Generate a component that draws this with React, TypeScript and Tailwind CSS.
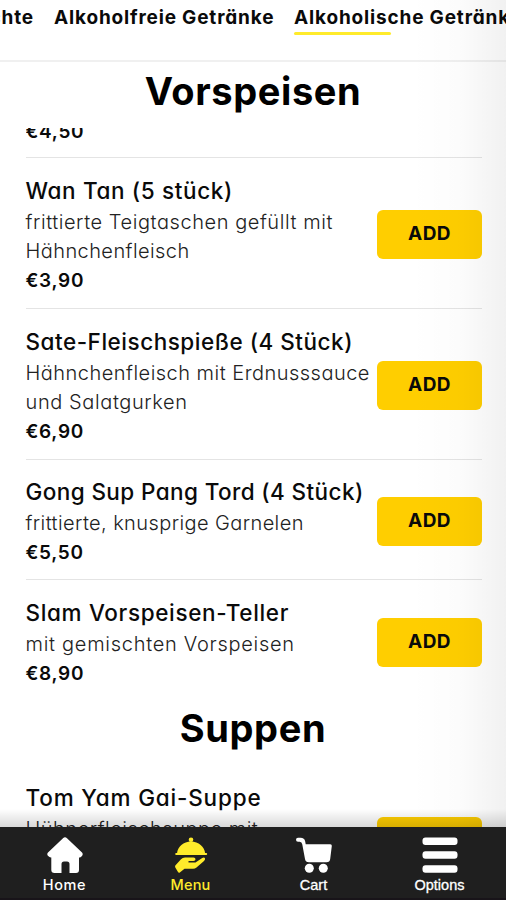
type Line = { text: string; tracking: string };

type Dish = {
  name: Line;
  lines: Line[];
  price?: string;
  box: string;
  body?: string;
};

const starters: Dish[] = [
  {
    name: { text: "Wan Tan (5 stück)", tracking: "tracking-[0.64px]" },
    lines: [
      { text: "frittierte Teigtaschen gefüllt mit", tracking: "tracking-[0.56px]" },
      { text: "Hähnchenfleisch", tracking: "tracking-[0.42px]" },
    ],
    price: "€3,90",
    box: "h-[151px] pt-4 border-b",
  },
  {
    name: { text: "Sate-Fleischspieße (4 Stück)", tracking: "tracking-[0.52px]" },
    lines: [
      { text: "Hähnchenfleisch mit Erdnusssauce", tracking: "tracking-[0.48px]" },
      { text: "und Salatgurken", tracking: "tracking-[0.6px]" },
    ],
    price: "€6,90",
    box: "h-[151px] pt-4 border-b",
  },
  {
    name: { text: "Gong Sup Pang Tord (4 Stück)", tracking: "tracking-[0.4px]" },
    lines: [{ text: "frittierte, knusprige Garnelen", tracking: "tracking-[0.4px]" }],
    price: "€5,50",
    box: "h-[120px] pt-[15px] border-b",
  },
  {
    name: { text: "Slam Vorspeisen-Teller", tracking: "tracking-[0.66px]" },
    lines: [{ text: "mit gemischten Vorspeisen", tracking: "tracking-[0.72px]" }],
    price: "€8,90",
    box: "h-[126px] pt-4",
  },
];

const soups: Dish[] = [
  {
    name: { text: "Tom Yam Gai-Suppe", tracking: "tracking-[0.82px]" },
    lines: [{ text: "Hühnerfleischsuppe mit", tracking: "tracking-[0.5px]" }],
    box: "h-[151px] pt-[17px]",
    body: "h-[121px]",
  },
];

function DishRow({ dish }: { dish: Dish }) {
  return (
    <div className={`ml-[25.5px] mr-6 flex shrink-0 items-start justify-between border-[#e4e4e4] ${dish.box}`}>
      <div className={`flex w-full items-center justify-between ${dish.body ?? ""}`}>
        <div className="w-[351px] self-start whitespace-nowrap">
          <h3 className={`text-[22.5px] leading-[33.5px] font-medium ${dish.name.tracking}`}>{dish.name.text}</h3>
          {dish.lines.map((line) => (
            <p key={line.text} className={`text-[20px] leading-[29.3px] font-light text-[#222] ${line.tracking}`}>
              {line.text}
            </p>
          ))}
          {dish.price && <p className="text-[19px] leading-[29.3px] font-semibold tracking-[0.7px]">{dish.price}</p>}
        </div>
        <button className="h-[49px] w-[105px] shrink-0 rounded-md bg-[#ffce00] text-[19px] font-bold tracking-[0.4px]">
          ADD
        </button>
      </div>
    </div>
  );
}

function HomeIcon() {
  return (
    <svg viewBox="0 0 36 36" className="size-9" fill="currentColor">
      <path d="M16 1.2Q18-.6 20 1.2L35 15.6Q36.4 17.2 35 19L33.5 20.2Q32.6 20.6 32 20.4V33Q32 36 29 36H22.5V27Q22.5 24.5 20 24.5H17Q14.5 24.5 14.5 27V36H7.500Q4.300 36 4.300 33V20.400Q3.500 20.700 2.500 20L.9 18.800Q-.4 17.200 1 15.600Z" />
    </svg>
  );
}

function MenuIcon() {
  return (
    <svg viewBox="0 0 36 36" className="size-9" fill="currentColor">
      <circle cx="18" cy="2.800" r="2.300" />
      <path d="M4 16.500C4.500 9.500 10.500 4.500 18 4.500S31.500 9.500 32.200 16.500Z" />
      <rect x="2.200" y="16" width="32" height="2" rx="1" />
      <path d="M2.300 28.500L8 22.200Q9.500 20.500 12 20.500H20.500Q22.500 20.500 22.500 22.200T20.500 24H15.500V25.500H22.500L29.200 21Q31.300 20 32 21.300Q32.500 22.500 31 24L23.500 30.500Q22 31.700 20 31.700H11.500L6.500 35.700Q5.500 36 5 35L2.300 30.500Q1.800 29.500 2.300 28.500Z" />
    </svg>
  );
}

function CartIcon() {
  return (
    <svg viewBox="0 0 36 36" className="size-9" fill="currentColor">
      <path d="M2 .8H4.500Q8.500.8 9.200 4.500L9.700 7.300H34.300Q36 7.300 35.800 9L34.200 22Q33.800 25.300 30.500 25.300H13Q9.500 25.300 9 22L6.300 7.500Q5.800 4.800 3.800 4.800H2Q0 4.600 0 2.800T2 .8Z" />
      <circle cx="13.300" cy="31.200" r="4.500" />
      <circle cx="27.300" cy="31.200" r="4.500" />
    </svg>
  );
}

function OptionsIcon() {
  return (
    <svg viewBox="0 0 36 36" className="size-9" fill="currentColor">
      <rect x="0.500" y="0.500" width="35" height="7.500" rx="3" />
      <rect x="0.500" y="14.300" width="35" height="7.500" rx="3" />
      <rect x="0.500" y="28.200" width="35" height="7.500" rx="3" />
    </svg>
  );
}

export default function App() {
  return (
    <div className="relative flex h-[900px] w-[506px] flex-col overflow-hidden bg-white font-['Inter',sans-serif] text-[#0a0a0a] [font-feature-settings:'cv11']">
      <div className="flex h-[62px] shrink-0 justify-start border-b-2 border-[#f0f0f0] text-[19px] leading-[35px] font-bold tracking-[0.83px] whitespace-nowrap">
        <div className="flex w-[34px] shrink-0 justify-end">Hauptgerichte</div>
        <div className="ml-5 w-[220px] shrink-0">Alkoholfreie Getränke</div>
        <div className="ml-5 shrink-0">
          Alkoholische Getränke
          <div className="-mt-[3px] h-[3px] w-[97px] rounded-sm bg-[#ffeb2b]" />
        </div>
      </div>

      <main className="flex h-[765px] shrink-0 flex-col overflow-hidden">
        <h2 className="h-[66px] shrink-0 pt-[6px] text-center text-[38px] leading-[46px] font-bold tracking-[0.6px] text-black">
          Vorspeisen
        </h2>
        <div className="mr-6 ml-[25.5px] h-[30px] shrink-0 overflow-hidden border-b border-[#e4e4e4]">
          <p className="-mt-[11px] text-[19px] leading-[29.3px] font-semibold tracking-[0.7px]">€4,50</p>
        </div>
        {starters.map((dish) => (
          <DishRow key={dish.name.text} dish={dish} />
        ))}
        <h2 className="h-[58px] shrink-0 text-center text-[38px] leading-[45px] font-bold tracking-[0.6px] text-black">
          Suppen
        </h2>
        {soups.map((dish) => (
          <DishRow key={dish.name.text} dish={dish} />
        ))}
      </main>

      {/* soft shading along the right edge and above the bottom bar */}
      <div className="pointer-events-none absolute top-0 right-0 h-[827px] w-24 bg-linear-to-r from-transparent via-black/[0.012] to-black/[0.055]" />
      <div className="pointer-events-none absolute top-[809px] left-0 h-[18px] w-full bg-linear-to-b from-transparent to-black/15" />

      <nav className="grid h-[73px] shrink-0 grid-cols-[127px_127px_119px_133px] border-b-2 border-[#181419] bg-[#1f1f1f] pt-[9.500px] text-white">
        <div className="flex flex-col items-center pl-0.5">
          <HomeIcon />
          <span className="mt-[2px] text-[14.5px] leading-5 font-medium tracking-[0.6px]">Home</span>
        </div>
        <div className="flex flex-col items-center text-[#ffeb2b]">
          <MenuIcon />
          <span className="mt-[2px] text-[14.5px] leading-5 font-medium tracking-[0.2px]">Menu</span>
        </div>
        <div className="flex flex-col items-center font-['Liberation_Sans',sans-serif]">
          <CartIcon />
          <span className="mt-[2px] text-[14.5px] leading-5 [-webkit-text-stroke:0.3px]">Cart</span>
        </div>
        <div className="flex flex-col items-center font-['Liberation_Sans',sans-serif]">
          <OptionsIcon />
          <span className="mt-[2px] text-[14.5px] leading-5 [-webkit-text-stroke:0.3px]">Options</span>
        </div>
      </nav>
    </div>
  );
}
